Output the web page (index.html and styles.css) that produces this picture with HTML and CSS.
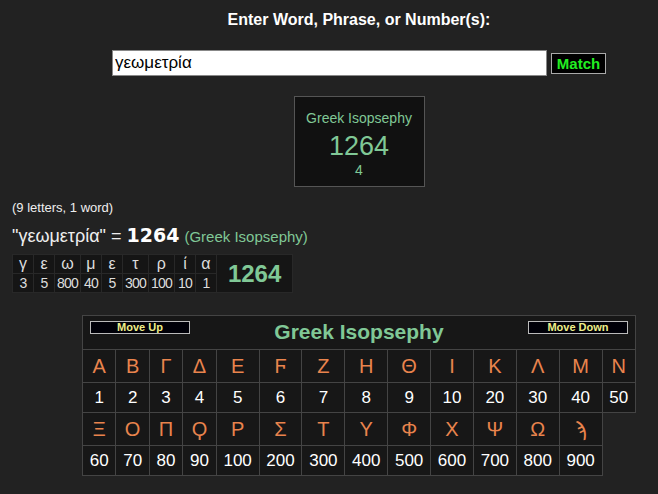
FILE: index.html
```html
<!DOCTYPE html>
<html lang="en">
<head>
    <meta charset="UTF-8">
    <meta name="viewport" content="width=device-width, initial-scale=1.0">
    <title>Gematria Calculator</title>
    <link rel="stylesheet" href="styles.css">
</head>
<body>
    <div class="page">
        <div class="prompt">Enter Word, Phrase, or Number(s):</div>
        <div class="search-row">
            <input type="text" class="search-input" value="γεωμετρία">
            <button class="match-button">Match</button>
        </div>
        <div class="result-box">
            <div class="result-name">Greek Isopsephy</div>
            <div class="result-value">1264</div>
            <div class="result-reduced">4</div>
        </div>
        <div class="counts">(9 letters, 1 word)</div>
        <div class="equation">"γεωμετρία" = <b class="eq-num">1264</b> <span class="eq-system">(Greek Isopsephy)</span></div>
        <table class="breakdown">
            <tr class="bd-letters">
                <td>γ</td><td>ε</td><td>ω</td><td>μ</td><td>ε</td><td>τ</td><td>ρ</td><td>ί</td><td>α</td>
                <td class="bd-total" rowspan="2">1264</td>
            </tr>
            <tr class="bd-nums">
                <td>3</td><td>5</td><td>800</td><td>40</td><td>5</td><td>300</td><td>100</td><td>10</td><td>1</td>
            </tr>
        </table>
        <table class="chart">
            <tr>
                <td class="chart-head" colspan="14">
                    <div class="head-row">
                        <button class="move-button">Move Up</button>
                        <span class="chart-title">Greek Isopsephy</span>
                        <button class="move-button">Move Down</button>
                    </div>
                </td>
            </tr>
            <tr class="letters">
                <td>Α</td><td>Β</td><td>Γ</td><td>Δ</td><td>Ε</td><td>Ϝ</td><td>Ζ</td><td>Η</td><td>Θ</td><td>Ι</td><td>Κ</td><td>Λ</td><td>Μ</td><td>Ν</td>
            </tr>
            <tr class="nums">
                <td>1</td><td>2</td><td>3</td><td>4</td><td>5</td><td>6</td><td>7</td><td>8</td><td>9</td><td>10</td><td>20</td><td>30</td><td>40</td><td>50</td>
            </tr>
            <tr class="letters">
                <td>Ξ</td><td>Ο</td><td>Π</td><td>Ϙ</td><td>Ρ</td><td>Σ</td><td>Τ</td><td>Υ</td><td>Φ</td><td>Χ</td><td>Ψ</td><td>Ω</td><td>ϡ</td>
            </tr>
            <tr class="nums">
                <td>60</td><td>70</td><td>80</td><td>90</td><td>100</td><td>200</td><td>300</td><td>400</td><td>500</td><td>600</td><td>700</td><td>800</td><td>900</td>
            </tr>
        </table>
    </div>
</body>
</html>
```

FILE: styles.css
```css
body {
    margin: 0;
    background-color: #222;
    color: #eee;
    font-family: "Liberation Sans", Arial, sans-serif;
}
.page {
    width: 658px;
    box-sizing: border-box;
    padding: 11px 0 0 60px;
}
.prompt {
    text-align: center;
    font-size: 16px;
    font-weight: bold;
    line-height: 18px;
    color: #fff;
}
.search-row {
    display: flex;
    justify-content: center;
    align-items: center;
    gap: 4px;
    margin-top: 21px;
}
.search-input {
    width: 435px;
    height: 26px;
    box-sizing: border-box;
    border: 1px solid #888;
    padding: 0 2px;
    font-family: "Liberation Sans", Arial, sans-serif;
    font-size: 17px;
    color: #000;
    background: #fff;
}
.match-button {
    width: 55px;
    height: 21px;
    padding: 0;
    background: #000;
    border: 1px solid #aaa;
    color: #22ee22;
    font-family: "Liberation Sans", Arial, sans-serif;
    font-size: 15px;
    font-weight: bold;
}
.result-box {
    width: 129px;
    margin: 20px auto 0;
    padding: 13px 0 8px;
    background: #111;
    border: 1px solid #555;
    text-align: center;
    color: #80c896;
}
.result-name {
    font-size: 14px;
    line-height: 16px;
}
.result-value {
    font-size: 27px;
    line-height: 32px;
    margin-top: 4px;
}
.result-reduced {
    font-size: 14px;
    line-height: 16px;
}
.counts {
    margin: 13px 0 0 -48px;
    font-size: 13px;
    line-height: 15px;
}
.equation {
    margin: 8px 0 0 -48px;
    font-size: 18px;
    line-height: 24px;
}
.eq-num {
    font-family: "DejaVu Sans", Verdana, sans-serif;
    font-size: 19px;
    color: #fff;
}
.eq-system {
    font-size: 15px;
    color: #80c896;
}
.breakdown {
    margin: 5px 0 0 -48px;
    border-collapse: collapse;
    background: #151515;
}
.breakdown td {
    border: 1px solid #282828;
    text-align: center;
    padding: 0 2px;
    min-width: 16px;
    height: 18px;
    color: #ddd;
}
.bd-letters td {
    font-size: 16px;
}
.bd-nums td {
    font-size: 14px;
    letter-spacing: -0.8px;
}
.breakdown td.bd-total {
    padding: 0 11px;
    font-size: 24px;
    font-weight: bold;
    letter-spacing: 0;
    color: #80c896;
}
.chart {
    margin: 22px auto 0;
    border-collapse: collapse;
}
.chart td {
    border: 1px solid #444;
    background: #171717;
    text-align: center;
    padding: 0 6.75px;
}
.chart td.chart-head {
    padding: 0;
    height: 33px;
    vertical-align: top;
}
.head-row {
    display: flex;
    justify-content: space-between;
    align-items: flex-start;
    padding: 5px 7px 0;
}
.move-button {
    width: 100px;
    height: 13px;
    padding: 0;
    background: #000008;
    border: 1px solid #bbb;
    color: #eeee88;
    font-family: "Liberation Sans", Arial, sans-serif;
    font-size: 11px;
    font-weight: bold;
    line-height: 11px;
}
.chart-title {
    font-size: 21px;
    font-weight: bold;
    line-height: 22px;
    color: #80c896;
}
.letters td {
    height: 32px;
    font-size: 20px;
    color: #e9844d;
}
.nums td {
    height: 29px;
    font-size: 17px;
    color: #fff;
}
```
